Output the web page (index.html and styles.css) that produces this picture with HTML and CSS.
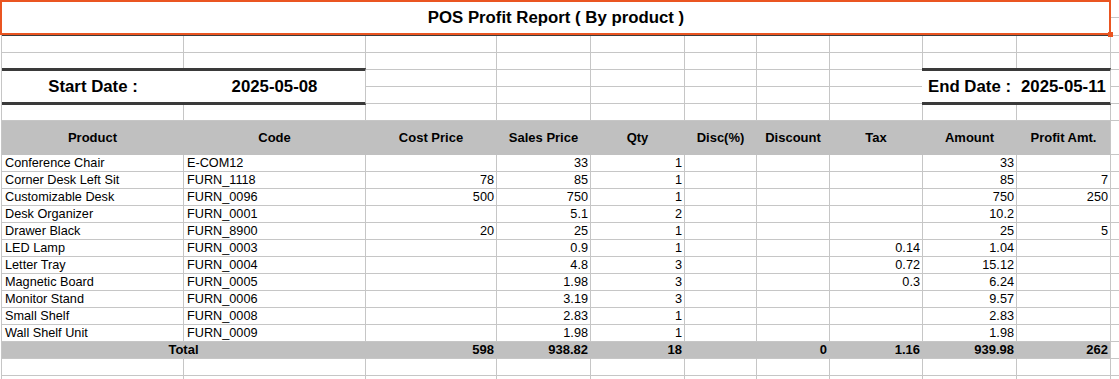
FILE: index.html
```html
<!DOCTYPE html>
<html>
<head>
<meta charset="utf-8">
<link rel="stylesheet" href="styles.css">
</head>
<body>
<div class="sheet">
  <div class="row title-row">
    <div class="c title">POS Profit Report ( By product )</div>
    <div class="c x split"></div>
  </div>
  <div class="row"><div class="c"></div><div class="c"></div><div class="c"></div><div class="c"></div><div class="c"></div><div class="c"></div><div class="c"></div><div class="c"></div><div class="c"></div><div class="c"></div><div class="c x"></div></div>
  <div class="row"><div class="c"></div><div class="c"></div><div class="c"></div><div class="c"></div><div class="c"></div><div class="c"></div><div class="c"></div><div class="c"></div><div class="c"></div><div class="c"></div><div class="c x"></div></div>
  <div class="row dates">
    <div class="c date nob">Start Date :</div>
    <div class="c date">2025-05-08</div>
    <div class="c"></div><div class="c"></div><div class="c"></div><div class="c"></div><div class="c"></div><div class="c"></div>
    <div class="c date nob end">End Date :</div>
    <div class="c date">2025-05-11</div>
    <div class="c x"></div>
    <div class="c"></div><div class="c"></div><div class="c"></div><div class="c"></div><div class="c"></div><div class="c"></div>
    <div class="c x"></div>
  </div>
  <div class="row"><div class="c"></div><div class="c"></div><div class="c"></div><div class="c"></div><div class="c"></div><div class="c"></div><div class="c"></div><div class="c"></div><div class="c"></div><div class="c"></div><div class="c x"></div></div>
  <div class="row hdr">
    <div class="c h">Product</div>
    <div class="c h">Code</div>
    <div class="c h">Cost Price</div>
    <div class="c h">Sales Price</div>
    <div class="c h">Qty</div>
    <div class="c h">Disc(%)</div>
    <div class="c h">Discount</div>
    <div class="c h">Tax</div>
    <div class="c h">Amount</div>
    <div class="c h last">Profit Amt.</div>
    <div class="c x"></div>
  </div>

  <div class="row"><div class="c">Conference Chair</div><div class="c">E-COM12</div><div class="c n"></div><div class="c n">33</div><div class="c n">1</div><div class="c n"></div><div class="c n"></div><div class="c n"></div><div class="c n">33</div><div class="c n"></div><div class="c x"></div></div>
  <div class="row"><div class="c">Corner Desk Left Sit</div><div class="c">FURN_1118</div><div class="c n">78</div><div class="c n">85</div><div class="c n">1</div><div class="c n"></div><div class="c n"></div><div class="c n"></div><div class="c n">85</div><div class="c n">7</div><div class="c x"></div></div>
  <div class="row"><div class="c">Customizable Desk</div><div class="c">FURN_0096</div><div class="c n">500</div><div class="c n">750</div><div class="c n">1</div><div class="c n"></div><div class="c n"></div><div class="c n"></div><div class="c n">750</div><div class="c n">250</div><div class="c x"></div></div>
  <div class="row"><div class="c">Desk Organizer</div><div class="c">FURN_0001</div><div class="c n"></div><div class="c n">5.1</div><div class="c n">2</div><div class="c n"></div><div class="c n"></div><div class="c n"></div><div class="c n">10.2</div><div class="c n"></div><div class="c x"></div></div>
  <div class="row"><div class="c">Drawer Black</div><div class="c">FURN_8900</div><div class="c n">20</div><div class="c n">25</div><div class="c n">1</div><div class="c n"></div><div class="c n"></div><div class="c n"></div><div class="c n">25</div><div class="c n">5</div><div class="c x"></div></div>
  <div class="row"><div class="c">LED Lamp</div><div class="c">FURN_0003</div><div class="c n"></div><div class="c n">0.9</div><div class="c n">1</div><div class="c n"></div><div class="c n"></div><div class="c n">0.14</div><div class="c n">1.04</div><div class="c n"></div><div class="c x"></div></div>
  <div class="row"><div class="c">Letter Tray</div><div class="c">FURN_0004</div><div class="c n"></div><div class="c n">4.8</div><div class="c n">3</div><div class="c n"></div><div class="c n"></div><div class="c n">0.72</div><div class="c n">15.12</div><div class="c n"></div><div class="c x"></div></div>
  <div class="row"><div class="c">Magnetic Board</div><div class="c">FURN_0005</div><div class="c n"></div><div class="c n">1.98</div><div class="c n">3</div><div class="c n"></div><div class="c n"></div><div class="c n">0.3</div><div class="c n">6.24</div><div class="c n"></div><div class="c x"></div></div>
  <div class="row"><div class="c">Monitor Stand</div><div class="c">FURN_0006</div><div class="c n"></div><div class="c n">3.19</div><div class="c n">3</div><div class="c n"></div><div class="c n"></div><div class="c n"></div><div class="c n">9.57</div><div class="c n"></div><div class="c x"></div></div>
  <div class="row"><div class="c">Small Shelf</div><div class="c">FURN_0008</div><div class="c n"></div><div class="c n">2.83</div><div class="c n">1</div><div class="c n"></div><div class="c n"></div><div class="c n"></div><div class="c n">2.83</div><div class="c n"></div><div class="c x"></div></div>
  <div class="row"><div class="c">Wall Shelf Unit</div><div class="c">FURN_0009</div><div class="c n"></div><div class="c n">1.98</div><div class="c n">1</div><div class="c n"></div><div class="c n"></div><div class="c n"></div><div class="c n">1.98</div><div class="c n"></div><div class="c x"></div></div>

  <div class="row tot">
    <div class="c t total-label">Total</div>
    <div class="c t n">598</div>
    <div class="c t n">938.82</div>
    <div class="c t n">18</div>
    <div class="c t n"></div>
    <div class="c t n">0</div>
    <div class="c t n">1.16</div>
    <div class="c t n">939.98</div>
    <div class="c t n last">262</div>
    <div class="c x"></div>
  </div>
  <div class="row"><div class="c"></div><div class="c"></div><div class="c"></div><div class="c"></div><div class="c"></div><div class="c"></div><div class="c"></div><div class="c"></div><div class="c"></div><div class="c"></div><div class="c x"></div></div>
  <div class="row"><div class="c"></div><div class="c"></div><div class="c"></div><div class="c"></div><div class="c"></div><div class="c"></div><div class="c"></div><div class="c"></div><div class="c"></div><div class="c"></div><div class="c x"></div></div>
</div>
<div class="cursor"></div>
<div class="handle"></div>
</body>
</html>
```

FILE: styles.css
```css
* { box-sizing: border-box; }
html, body { margin: 0; padding: 0; background: #fff; }
body {
  font-family: "Liberation Sans", Arial, sans-serif;
  color: #000;
  width: 1119px;
  height: 379px;
  overflow: hidden;
  position: relative;
}
.sheet {
  margin-left: 1px;
  border-left: 1px solid #c6c6c6;
  width: 1118px;
}
.row {
  display: grid;
  grid-template-columns: 182px 182px 131px 94px 94px 72px 73px 93px 94px 94px 1fr;
  grid-auto-rows: 17px;
}
.c {
  border-right: 1px solid #c6c6c6;
  border-bottom: 1px solid #c6c6c6;
  font-size: 12.7px;
  line-height: 16px;
  padding: 0 3px;
  white-space: nowrap;
  overflow: hidden;
}
.c.n { text-align: right; padding: 0 2px 0 0; }
.c.x { border-right: none; }

.title-row { grid-auto-rows: 36px; }
.title {
  grid-column: span 10;
  border-bottom: 1px solid #3c3c3c;
  font-size: 16.8px;
  font-weight: bold;
  display: flex;
  align-items: center;
  justify-content: center;
  padding-top: 1px;
}
.split {
  background: linear-gradient(#fff 0 17px, #c6c6c6 17px 18px, #fff 18px);
}

.dates { grid-template-rows: 17px 17px; }
.date {
  grid-row: span 2;
  border-top: 3px solid #3a3a3a;
  border-bottom: 3px solid #3a3a3a;
  margin-top: -2px;
  margin-bottom: -1px;
  font-size: 16.8px;
  font-weight: bold;
  display: flex;
  align-items: center;
  justify-content: center;
  padding-top: 1px;
  background: #fff;
  position: relative;
  z-index: 1;
}
.date.nob { border-right: none; }
.date.end { margin-left: -1px; }

.hdr { grid-auto-rows: 34px; }
.h {
  background: #c0c0c0;
  border-right-color: #c0c0c0;
  border-bottom-color: #c0c0c0;
  font-weight: bold;
  font-size: 13px;
  display: flex;
  align-items: center;
  justify-content: center;
  padding-top: 1px;
}
.h.last, .t.last { border-right-color: #c6c6c6; }

.t {
  background: #c0c0c0;
  border-right-color: #c0c0c0;
  border-bottom-color: #c6c6c6;
  font-weight: bold;
  font-size: 13px;
}
.total-label {
  grid-column: span 2;
  text-align: center;
}

.cursor {
  position: absolute;
  left: 0;
  top: 0;
  width: 1111px;
  height: 35px;
  border: 2px solid #ea5521;
}
.handle {
  position: absolute;
  left: 1108px;
  top: 32px;
  width: 5px;
  height: 5px;
  background: #ea5521;
}
```
